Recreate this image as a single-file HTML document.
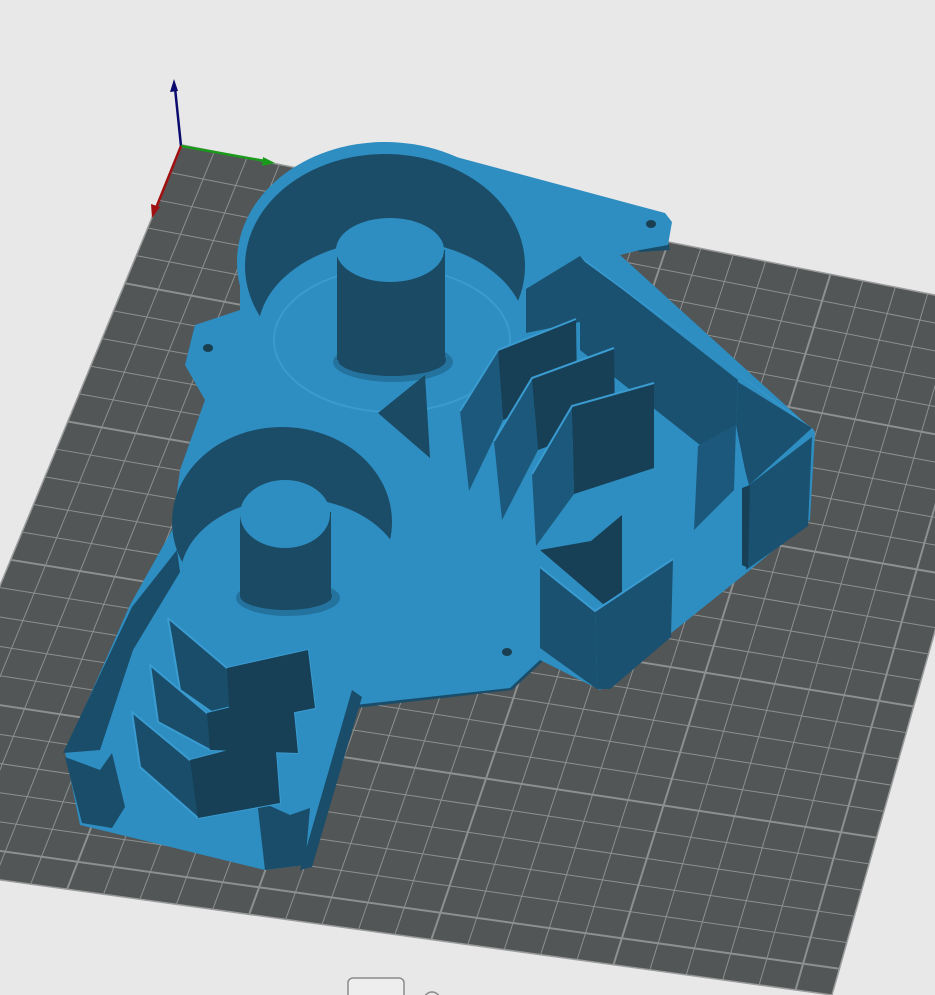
<!DOCTYPE html>
<html><head><meta charset="utf-8"><style>
html,body{margin:0;padding:0;background:#e8e8e8;width:935px;height:995px;overflow:hidden}
svg{display:block}
</style></head><body>
<svg id="s" width="935" height="995" viewBox="0 0 935 995" xmlns="http://www.w3.org/2000/svg">
<rect width="935" height="995" fill="#e8e8e8"/>
<polygon points="182,145 1025,313 832,995 -115,864" fill="#525657" stroke="#9a9b9b" stroke-width="1.5"/>
<g id="grid" stroke="#8e908f" fill="none"></g>

<line x1="181" y1="146" x2="175" y2="88" stroke="#0b0b6e" stroke-width="2.5"/>
<polygon points="174,79 170,92 178,91" fill="#0b0b6e"/>
<line x1="181" y1="146" x2="265" y2="161" stroke="#1a9a1a" stroke-width="2.5"/>
<polygon points="275,163 263,157 262,166" fill="#1a9a1a"/>
<line x1="181" y1="146" x2="156" y2="208" stroke="#a01010" stroke-width="2.5"/>
<polygon points="152,218 151,204 160,207" fill="#a01010"/>

<polygon points="352,680 510,672 540,650 542,662 512,690 356,708" fill="#1a4d69"/>
<polygon points="600,252 668,240 670,250 640,252 625,245 598,262" fill="#1a4d69"/>

<g fill="#2e8ec1">
<polygon points="240,310 195,325 185,365 205,400 180,470 172,530 130,605 65,752 80,825 265,870 305,865 355,705 510,688 540,660 600,690 750,570 810,520 815,432 620,255 640,250 668,245 672,222 665,213 430,150 340,165 270,200 240,260"/>
<ellipse cx="385" cy="262" rx="148" ry="120"/>
</g>

<ellipse cx="385" cy="266" rx="140" ry="112" fill="#1b4d68"/>
<ellipse cx="392" cy="332" rx="134" ry="92" fill="#2e8ec1"/>
<ellipse cx="392" cy="340" rx="118" ry="72" fill="none" stroke="#3a9bd0" stroke-width="2"/>
<ellipse cx="393" cy="362" rx="60" ry="20" fill="#24739f"/>
<rect x="337" y="250" width="108" height="110" fill="#1a4a64"/>
<ellipse cx="392" cy="360" rx="54" ry="16" fill="#1a4a64"/>
<ellipse cx="390" cy="250" rx="54" ry="32" fill="#2e8ec1"/>

<ellipse cx="282" cy="522" rx="110" ry="95" fill="#1b4d68"/>
<ellipse cx="292" cy="578" rx="112" ry="80" fill="#2e8ec1"/>
<ellipse cx="288" cy="598" rx="52" ry="18" fill="#24739f"/>
<rect x="240" y="512" width="91" height="84" fill="#1a4a64"/>
<ellipse cx="286" cy="596" rx="46" ry="14" fill="#1a4a64"/>
<ellipse cx="285" cy="514" rx="45" ry="34" fill="#2e8ec1"/>

<ellipse cx="208" cy="348" rx="5" ry="4" fill="#1a3f52"/>
<ellipse cx="651" cy="224" rx="5" ry="4" fill="#1a3f52"/>
<ellipse cx="507" cy="652" rx="5" ry="4" fill="#1a3f52"/>

<polygon points="378,413 425,375 430,458" fill="#1a4a64"/>

<polygon points="526,289 580,256 580,322 526,333" fill="#1a5070"/>
<polygon points="580,256 738,380 736,425 700,445 580,350" fill="#1a5070"/>
<polygon points="580,256 815,432 812,428 585,262" fill="#3a9bd0"/>
<polygon points="738,382 812,428 749,485 745,470 736,425" fill="#1a5070"/>
<polygon points="698,446 736,425 734,490 694,530" fill="#1b587b"/>
<polygon points="749,485 812,437 808,526 746,570" fill="#1a5070"/>
<polygon points="742,488 750,485 748,568 742,565" fill="#173f55"/>

<!-- upper fins: narrow left face + front face -->
<polygon points="460,411 498,350 503,420 469,491" fill="#1b587b"/>
<polygon points="498,350 576,319 577,389 503,420" fill="#173f55"/>
<polyline points="460,411 498,350 576,319" fill="none" stroke="#3a9bd0" stroke-width="2"/>
<polygon points="494,441 532,378 538,450 502,520" fill="#1b587b"/>
<polygon points="532,378 614,348 615,422 538,450" fill="#173f55"/>
<polyline points="494,441 532,378 614,348" fill="none" stroke="#3a9bd0" stroke-width="2"/>
<polygon points="532,474 572,406 574,494 536,546" fill="#1b587b"/>
<polygon points="572,406 654,383 654,468 574,494" fill="#173f55"/>
<polyline points="532,474 572,406 654,383" fill="none" stroke="#3a9bd0" stroke-width="2"/>

<polygon points="540,550 591,541 622,515 622,596 603,604" fill="#173f55"/>
<polygon points="540,567 595,611 597,689 540,648" fill="#1a5070"/>
<polygon points="595,611 673,559 671,637 610,689 597,689" fill="#1a5070"/>
<polyline points="540,567 595,611 673,559" fill="none" stroke="#3a9bd0" stroke-width="2"/>

<polygon points="63,753 132,607 177,550 180,572 133,650 100,750" fill="#1a4d69"/>
<polygon points="65,757 100,770 112,753 125,807 112,828 82,823" fill="#1a4d69"/>
<polygon points="257,800 290,815 310,808 305,865 265,870" fill="#1a4d69"/>
<polygon points="352,690 362,697 312,867 300,870" fill="#1a4d69"/>
<g stroke="#3a9bd0" stroke-width="2" stroke-linejoin="round">
<polygon points="168,618 227,668 308,650 315,708 230,725 180,690" fill="#1a4d69"/>
<polygon points="150,665 207,713 292,692 298,753 210,750 158,722" fill="#1a4d69"/>
<polygon points="132,712 190,760 275,738 280,803 198,818 140,767" fill="#1a4d69"/>
</g>
<polygon points="227,668 308,650 315,708 230,725" fill="#173f55"/>
<polygon points="207,713 292,692 298,753 210,750" fill="#173f55"/>
<polygon points="190,760 275,738 280,803 198,818" fill="#173f55"/>

<rect x="348" y="978" width="56" height="30" rx="5" fill="#eeeeee" stroke="#8a8a8a" stroke-width="1.5"/>
<circle cx="432" cy="1000" r="8" fill="none" stroke="#8a8a8a" stroke-width="1.5"/>
</svg>
<script>
(function(){
var g=document.getElementById('grid');
var TL=[182,145],TR=[1025,313],BR=[832,995],BL=[-115,864];
function P(u,v){
 var x=(1-u)*(1-v)*TL[0]+u*(1-v)*TR[0]+u*v*BR[0]+(1-u)*v*BL[0];
 var y=(1-u)*(1-v)*TL[1]+u*(1-v)*TR[1]+u*v*BR[1]+(1-u)*v*BL[1];
 return [x,y];}
var N=26,s='';
for(var i=1;i<N;i++){
 var t=i/N,w=(i%5==0)?2:1;
 var a=P(t,0),b=P(t,1);
 s+='<line x1="'+a[0]+'" y1="'+a[1]+'" x2="'+b[0]+'" y2="'+b[1]+'" stroke-width="'+w+'"/>';
 a=P(0,t);b=P(1,t);
 s+='<line x1="'+a[0]+'" y1="'+a[1]+'" x2="'+b[0]+'" y2="'+b[1]+'" stroke-width="'+w+'"/>';
}
g.innerHTML=s;
})();
</script>
</body></html>
